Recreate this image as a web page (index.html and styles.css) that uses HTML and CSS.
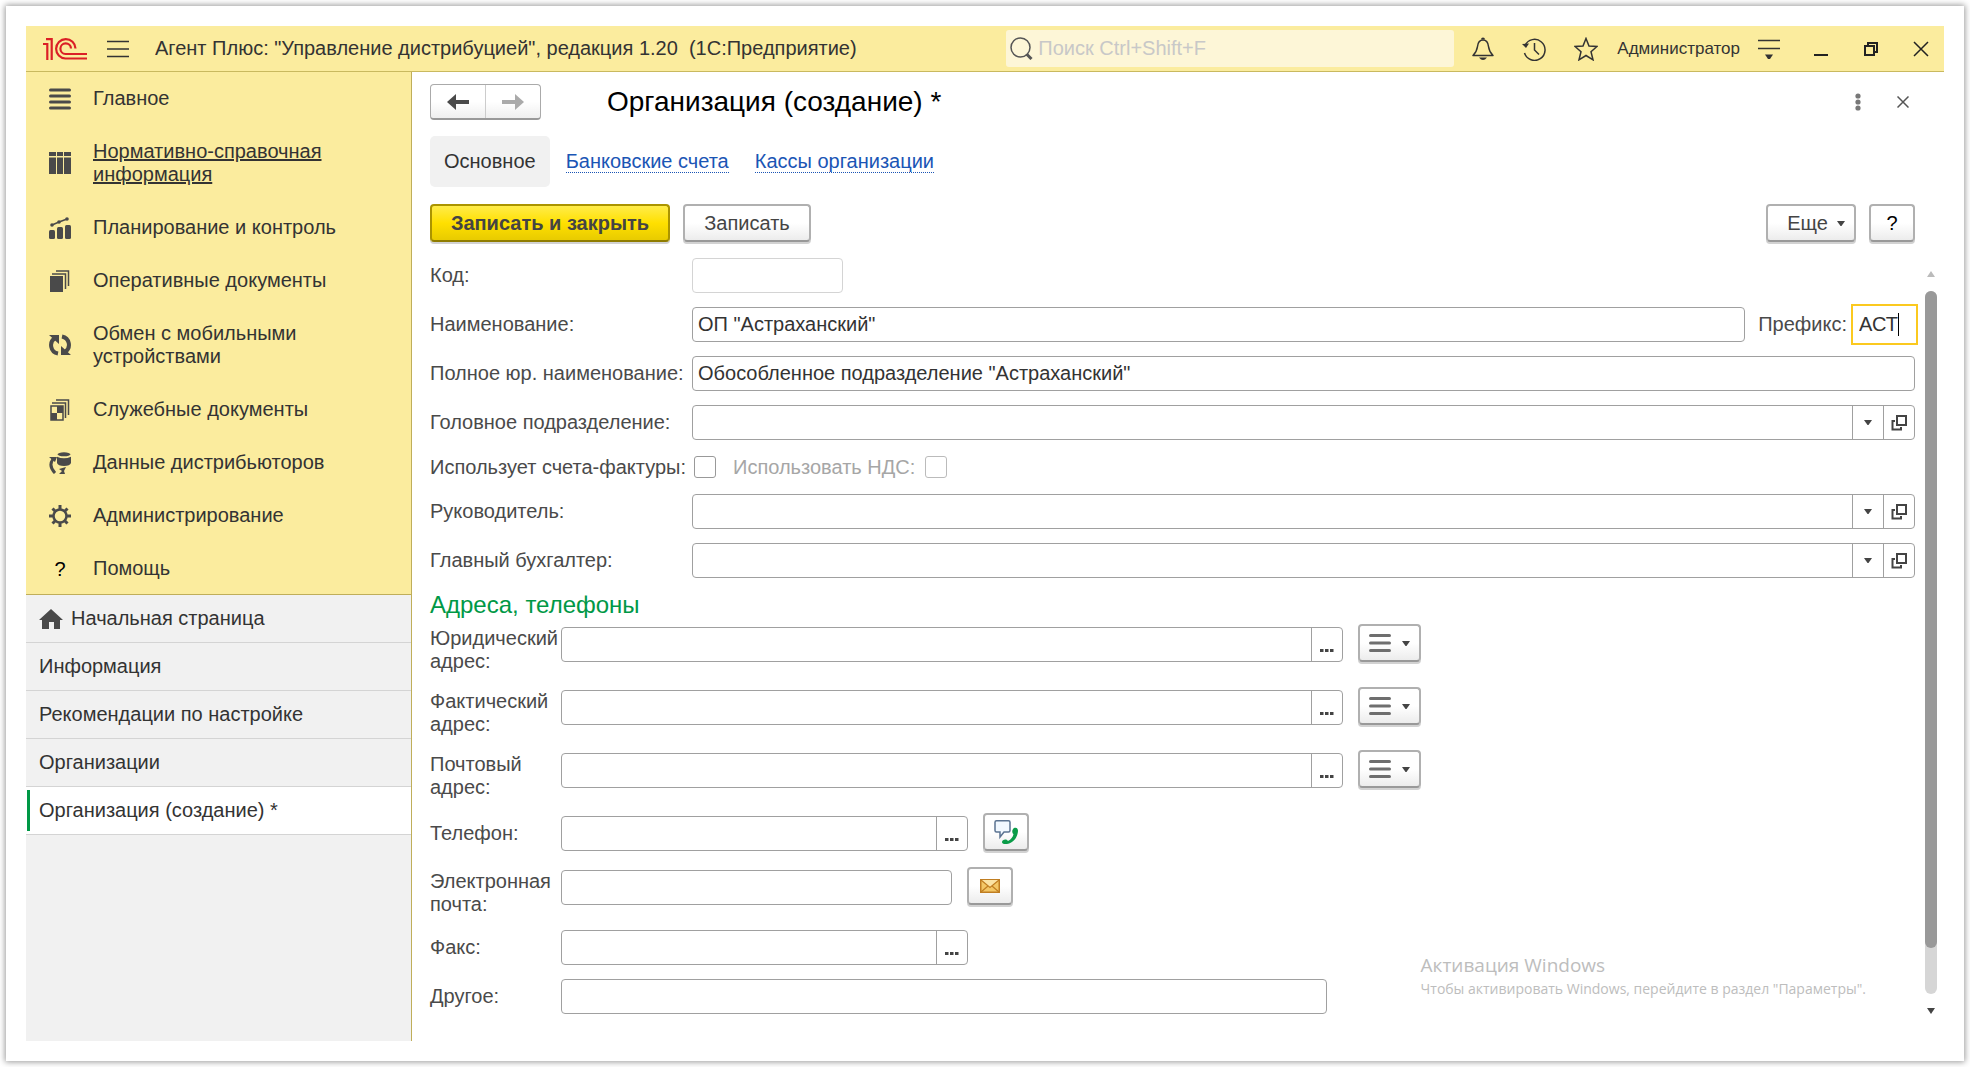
FILE: index.html
```html
<!DOCTYPE html>
<html lang="ru">
<head>
<meta charset="utf-8">
<title>Организация (создание) *</title>
<link rel="stylesheet" href="styles.css">
</head>
<body>
<svg class="defs" aria-hidden="true">
  <symbol id="i-open" viewBox="0 0 16 16"><path d="M6 1h9v9H6zM4 6H1.500v8.500H10V12" fill="none" stroke="#444" stroke-width="2"/></symbol>
  <symbol id="i-down" viewBox="0 0 8 5"><path d="M0 0h8L4.500 5h-1z" fill="#444"/></symbol>
  <symbol id="i-dots" viewBox="0 0 14 3"><path d="M0 0h3.500v3H0zM5 0h3.500v3H5zM10 0h3.500v3H10z" fill="#444"/></symbol>
  <symbol id="i-lines" viewBox="0 0 22 20"><path d="M1.500 2.500h19M1.500 10h19M1.500 17.500h19" stroke="#6e6e6e" stroke-width="3" stroke-linecap="round"/></symbol>
</svg>
<div class="card">
  <div class="app">
    <header class="topbar">
      <svg class="logo" viewBox="0 0 44 22" role="img" aria-label="1С"><g fill="none" stroke="#db1f26" stroke-width="2.200"><path d="M0 6h4.300V22M3 1.200h5.700V22"/><path d="M32.500 10.500A9.700 9.700 0 1 0 22.500 20.500H44"/><path d="M28 10.500A5.300 5.300 0 1 0 22.500 16H44"/></g></svg>
      <button class="icon-btn burger" aria-label="Меню"><svg width="22" height="18" viewBox="0 0 22 18"><path d="M0 1.500h22M0 9h22M0 16.500h22" stroke="#333" stroke-width="1.500"/></svg></button>
      <div class="app-title">Агент Плюс: "Управление дистрибуцией", редакция 1.20&nbsp; (1С:Предприятие)</div>
      <label class="search">
        <svg width="23" height="23" viewBox="0 0 23 23"><circle cx="10.500" cy="10.500" r="9.500" fill="none" stroke="#555" stroke-width="1.500"/><path d="M16.500 17l5 5" stroke="#555" stroke-width="3"/></svg>
        <input type="search" placeholder="Поиск Ctrl+Shift+F" aria-label="Поиск">
      </label>
      <div class="tools">
        <button class="icon-btn" aria-label="Уведомления"><svg width="22" height="24" viewBox="0 0 22 24"><path d="M1 18.500h20c-3-3-4-5-4.500-9C16 5 14 3 11 3S6 5 5.500 9.500C5 13.500 4 15.500 1 18.500z" fill="none" stroke="#333" stroke-width="1.500" stroke-linejoin="round"/><path d="M9 2.500a2 2 0 0 1 4 0zM7 20.500h8q-4 5-8 0z" fill="#333"/></svg></button>
        <button class="icon-btn" aria-label="История"><svg width="24" height="24" viewBox="0 0 24 24"><path d="M3 8.500A10.500 10.500 0 1 1 2.500 16M12.500 6v7l4.500 4.500" fill="none" stroke="#333" stroke-width="1.500"/><path d="M0 7l7-.500L4 11z" fill="#333"/></svg></button>
        <button class="icon-btn" aria-label="Избранное"><svg width="24" height="24" viewBox="0 0 24 24"><path d="M12 1.500l3 7.500 8 .500-6 5.300 2 8-7-4.300-7 4.300 2-8L1 9.500 9 9z" fill="none" stroke="#333" stroke-width="1.500"/></svg></button>
      </div>
      <a class="user" href="#">Администратор</a>
      <button class="icon-btn service" aria-label="Сервис"><svg width="22" height="20" viewBox="0 0 22 20"><path d="M0 1.500h22M0 9.500h22" stroke="#333" stroke-width="1.500"/><path d="M7 15.500h8L12 20h-2z" fill="#333"/></svg></button>
      <div class="window-btns">
        <button class="icon-btn" aria-label="Свернуть"><svg width="16" height="16" viewBox="0 0 16 16"><path d="M1 14h14" stroke="#222" stroke-width="2"/></svg></button>
        <button class="icon-btn" aria-label="Развернуть"><svg width="16" height="16" viewBox="0 0 16 16"><path d="M2 5h9v9H2zM5 5V2h9v9h-3" fill="none" stroke="#222" stroke-width="2"/></svg></button>
        <button class="icon-btn" aria-label="Закрыть"><svg width="16" height="16" viewBox="0 0 16 16"><path d="M1 1l14 14M15 1L1 15" stroke="#222" stroke-width="1.500"/></svg></button>
      </div>
    </header>
    <div class="body">
      <aside class="sidebar">
        <nav class="sections">
          <a href="#"><svg viewBox="0 0 22 22"><path d="M1.500 2h19M1.500 8h19M1.500 14h19M1.500 20h19" stroke="#4a4a4a" stroke-width="3" stroke-linecap="round"/></svg><span>Главное</span></a>
          <a href="#" class="hovered"><svg viewBox="0 0 22 22"><path d="M0 0h7v4H0zM8 0h6v4H8zM15 0h7v4h-7zM0 5.500h7V22H0zM8 5.500h6V22H8zM15 5.500h7V22h-7z" fill="#4a4a4a"/></svg><span>Нормативно-справочная информация</span></a>
          <a href="#"><svg viewBox="0 0 22 22"><g fill="#4a4a4a"><rect y="13" width="6" height="9" rx="1.500"/><rect x="8" y="10" width="6" height="12" rx="1.500"/><rect x="16" y="8" width="6" height="14" rx="1.500"/><circle cx="3" cy="8" r="1.800"/><circle cx="10" cy="5" r="1.800"/><circle cx="18" cy="2" r="1.800"/></g><path d="M3 8l7-3 8-3" fill="none" stroke="#4a4a4a" stroke-width="1.500"/></svg><span>Планирование и контроль</span></a>
          <a href="#"><svg viewBox="0 0 22 22"><path d="M1 6h13v16H1z" fill="#4a4a4a"/><path d="M3 4h13.500v15M7 1h12.500v15" fill="none" stroke="#4a4a4a" stroke-width="1.500"/></svg><span>Оперативные документы</span></a>
          <a href="#"><svg viewBox="0 0 22 22"><path d="M9 19.500A8.500 8.500 0 0 1 6 4M13 2.500A8.500 8.500 0 0 1 16 18" fill="none" stroke="#4a4a4a" stroke-width="4"/><path d="M0 1h10v9zM22 21H12v-9z" fill="#4a4a4a"/></svg><span>Обмен с мобильными устройствами</span></a>
          <a href="#"><svg viewBox="0 0 22 22"><path d="M2 7h12v14H2z" fill="none" stroke="#4a4a4a" stroke-width="1.500"/><path d="M8 7h6v7H8zM2 14h6v7H2z" fill="#4a4a4a"/><path d="M3 4h13.500v15M7 1h12.500v15" fill="none" stroke="#4a4a4a" stroke-width="1.500"/></svg><span>Служебные документы</span></a>
          <a href="#"><svg viewBox="0 0 22 22"><ellipse cx="15" cy="2.300" rx="6.500" ry="2" fill="#4a4a4a"/><path d="M8 4.800q7 3 14 0V11q-1 3-7 3t-7-3z" fill="#4a4a4a"/><path d="M6 21Q-1 14 4 7" fill="none" stroke="#4a4a4a" stroke-width="3"/><path d="M0 5h8l-2 5zM10 17l7-2-2 4 1 3h-6l3-3z" fill="#4a4a4a"/></svg><span>Данные дистрибьюторов</span></a>
          <a href="#"><svg viewBox="0 0 22 22"><circle cx="11" cy="11" r="6.500" fill="none" stroke="#4a4a4a" stroke-width="2.500"/><path d="M11 0v4M11 18v4M0 11h4M18 11h4M3.500 3.500l2.500 2.500M16 16l2.500 2.500M18.500 3.500L16 6M6 16l-2.500 2.500" stroke="#4a4a4a" stroke-width="3"/></svg><span>Администрирование</span></a>
          <a href="#"><b class="question">?</b><span>Помощь</span></a>
        </nav>
        <nav class="windows">
          <a href="#"><svg width="24" height="20" viewBox="0 0 24 20"><path d="M12 0l12 11h-3v9h-6v-7H10v7H3v-9H0z" fill="#4a4a4a"/></svg>Начальная страница</a>
          <a href="#">Информация</a>
          <a href="#">Рекомендации по настройке</a>
          <a href="#">Организации</a>
          <a href="#" class="current">Организация (создание) *</a>
        </nav>
      </aside>
      <main class="main">
        <div class="page-head">
          <div class="history">
            <button aria-label="Назад"><svg width="22" height="16" viewBox="0 0 22 16"><path d="M0 8l9-8v6h13v4H9v6z" fill="#4a4a4a"/></svg></button>
            <button aria-label="Вперед" disabled><svg width="22" height="16" viewBox="0 0 22 16"><path d="M22 8l-9-8v6H0v4h13v6z" fill="#aaa"/></svg></button>
          </div>
          <h1>Организация (создание) *</h1>
          <button class="icon-btn" aria-label="Действия"><svg width="16" height="18" viewBox="0 0 16 18"><g fill="#777"><circle cx="8" cy="3" r="2.600"/><circle cx="8" cy="9" r="2.600"/><circle cx="8" cy="15" r="2.600"/></g></svg></button>
          <button class="icon-btn" aria-label="Закрыть форму"><svg width="12" height="12" viewBox="0 0 12 12"><path d="M.500.500l11 11M11.500.500l-11 11" stroke="#555" stroke-width="1.500"/></svg></button>
        </div>
        <nav class="tabs">
          <span class="active">Основное</span>
          <a href="#">Банковские счета</a>
          <a href="#">Кассы организации</a>
        </nav>
        <div class="commands">
          <button class="btn primary">Записать и закрыть</button>
          <button class="btn save">Записать</button>
          <button class="btn more">Еще<svg width="8" height="5"><use href="#i-down"/></svg></button>
          <button class="btn help">?</button>
        </div>
        <div class="scroll-area">
          <form class="form">
            <div class="group">
              <div class="row"><label for="code">Код:</label><input class="box short" id="code" disabled></div>
              <div class="row"><label for="name">Наименование:</label><input class="box grow" id="name" value='ОП "Астраханский"'><label class="inner" for="prefix">Префикс:</label><span class="prefix"><input class="box" id="prefix" value="АСТ"><i class="caret"></i></span></div>
              <div class="row"><label for="full">Полное юр. наименование:</label><input class="box grow" id="full" value='Обособленное подразделение "Астраханский"'></div>
              <div class="row"><label for="head">Головное подразделение:</label><div class="box combo grow"><input id="head"><button type="button" aria-label="Выбрать"><svg width="8" height="5"><use href="#i-down"/></svg></button><button type="button" aria-label="Открыть"><svg width="16" height="16"><use href="#i-open"/></svg></button></div></div>
              <div class="row checks"><label for="inv">Использует счета-фактуры:</label><input type="checkbox" id="inv"><label class="inner muted" for="vat">Использовать НДС:</label><input type="checkbox" id="vat" disabled></div>
              <div class="row"><label for="chief">Руководитель:</label><div class="box combo grow"><input id="chief"><button type="button" aria-label="Выбрать"><svg width="8" height="5"><use href="#i-down"/></svg></button><button type="button" aria-label="Открыть"><svg width="16" height="16"><use href="#i-open"/></svg></button></div></div>
              <div class="row"><label for="acc">Главный бухгалтер:</label><div class="box combo grow"><input id="acc"><button type="button" aria-label="Выбрать"><svg width="8" height="5"><use href="#i-down"/></svg></button><button type="button" aria-label="Открыть"><svg width="16" height="16"><use href="#i-open"/></svg></button></div></div>
            </div>
            <h2>Адреса, телефоны</h2>
            <div class="group contacts">
              <div class="row address"><label class="tall" for="legal">Юридический адрес:</label><div class="box combo long"><input id="legal"><button type="button" aria-label="Выбрать"><svg class="dots" width="14" height="3"><use href="#i-dots"/></svg></button></div><button type="button" class="btn list" aria-label="Меню адреса"><svg width="22" height="20"><use href="#i-lines"/></svg><svg width="8" height="5"><use href="#i-down"/></svg></button></div>
              <div class="row address"><label class="tall" for="actual">Фактический адрес:</label><div class="box combo long"><input id="actual"><button type="button" aria-label="Выбрать"><svg class="dots" width="14" height="3"><use href="#i-dots"/></svg></button></div><button type="button" class="btn list" aria-label="Меню адреса"><svg width="22" height="20"><use href="#i-lines"/></svg><svg width="8" height="5"><use href="#i-down"/></svg></button></div>
              <div class="row address"><label class="tall" for="post">Почтовый адрес:</label><div class="box combo long"><input id="post"><button type="button" aria-label="Выбрать"><svg class="dots" width="14" height="3"><use href="#i-dots"/></svg></button></div><button type="button" class="btn list" aria-label="Меню адреса"><svg width="22" height="20"><use href="#i-lines"/></svg><svg width="8" height="5"><use href="#i-down"/></svg></button></div>
              <div class="row phone"><label for="phone">Телефон:</label><div class="box combo middle"><input id="phone" type="tel"><button type="button" aria-label="Выбрать"><svg class="dots" width="14" height="3"><use href="#i-dots"/></svg></button></div><button type="button" class="btn square" aria-label="Позвонить"><svg width="24" height="24" viewBox="0 0 24 24"><path d="M2.500.800h12q1.500 0 1.500 1.500v8.200q0 1.500-1.500 1.500H10l-4 5v-5H2.500Q1 12 1 10.500V2.300Q1 .800 2.500.800z" fill="#f1f8ff" stroke="#5b7391" stroke-width="1.500"/><path d="M20 8c3-1 4 1 4 3-.500 7-5 12-11 13-3 .500-5-.500-5-2 0-2 3-3 5-2l1 1c3-1.500 5-4 5.500-7-1.500-1-2-4 .500-6z" fill="#0a9c48"/></svg></button></div>
              <div class="row"><label class="tall" for="mail">Электронная почта:</label><input class="box mail" id="mail" type="email"><button type="button" class="btn square" aria-label="Написать"><svg width="20" height="14" viewBox="0 0 20 14"><path d="M.750.750h18.500v12.500H.750z" fill="#f3c766" stroke="#c07e22" stroke-width="1.500"/><path d="M1 1l9 7.500L19 1z" fill="#fbe3a4"/><path d="M1 1l9 7.500L19 1M1 13l7-6M19 13l-7-6" fill="none" stroke="#c07e22" stroke-width="1.200"/></svg></button></div>
              <div class="row"><label for="fax">Факс:</label><div class="box combo middle"><input id="fax" type="tel"><button type="button" aria-label="Выбрать"><svg class="dots" width="14" height="3"><use href="#i-dots"/></svg></button></div></div>
              <div class="row"><label for="other">Другое:</label><input class="box other" id="other"></div>
            </div>
          </form>
          <div class="scrollbar" aria-hidden="true">
            <svg width="8" height="6" viewBox="0 0 8 6"><path d="M4 0l4 6H0z" fill="#bbb"/></svg>
            <div class="track"><div class="thumb"></div></div>
            <svg width="8" height="6" viewBox="0 0 8 6"><path d="M4 6l4-6H0z" fill="#444"/></svg>
          </div>
        </div>
        <div class="watermark"><strong>Активация Windows</strong><span>Чтобы активировать Windows, перейдите в раздел "Параметры".</span></div>
      </main>
    </div>
  </div>
</div>
</body>
</html>
```
FILE: styles.css
```css
* { box-sizing: border-box; }
body {
  margin: 0;
  min-height: 100vh;
  display: flex;
  padding: 6px;
  background: #fff;
  color: #333;
  font: 20px/23px "Liberation Sans", Arial, sans-serif;
}
button, input { font: inherit; color: inherit; }
button { padding: 0; border: 0; background: none; }
a { color: inherit; text-decoration: none; }
svg { display: block; flex: none; }
.defs { position: absolute; width: 0; height: 0; }

.card {
  flex: 1;
  display: flex;
  padding: 20px;
  background: #fff;
  box-shadow: 0 0 6px 1px rgba(0, 0, 0, .4);
}
.app { flex: 1; min-width: 0; display: flex; flex-direction: column; }

/* Top bar */
.topbar {
  display: flex;
  align-items: center;
  height: 46px;
  padding: 0 15px 0 17px;
  background: #fbec9e;
  border-bottom: 1px solid #c9b95f;
}
.icon-btn { display: flex; align-items: center; justify-content: center; flex: none; }
.logo { width: 44px; height: 22px; }
.burger { margin: 0 26px 0 20px; }
.app-title { flex: 1; min-width: 0; white-space: nowrap; overflow: hidden; }
.search {
  flex: 0 1 448px;
  display: flex;
  align-items: center;
  gap: 5px;
  height: 37px;
  padding: 0 4px;
  border-radius: 3px;
  background: #fdf6d7;
}
.search input { flex: 1; min-width: 0; padding: 0; border: 0; outline: 0; background: none; }
.search input::placeholder { color: #c8c8c8; opacity: 1; }
.tools { display: flex; gap: 28px; margin: 0 19px 0 18px; }
.user { font-size: 17px; }
.service { margin: 0 33px 0 18px; }
.window-btns { display: flex; gap: 34px; }

.body { flex: 1; display: flex; }

/* Sidebar */
.sidebar {
  flex: none;
  width: 386px;
  background: #f1f1f1;
  border-right: 1px solid #bfae5a;
}
.sections { background: #fbec9e; box-shadow: inset 0 -1px #bfae5a; }
.sections a {
  display: flex;
  align-items: center;
  gap: 22px;
  padding: 15px 60px 15px 23px;
}
.sections svg, .question { width: 22px; height: 22px; flex: none; }
.question { color: #000; font-weight: 400; text-align: center; }
.hovered { text-decoration: underline; }
.windows a {
  display: flex;
  align-items: center;
  gap: 8px;
  height: 48px;
  padding: 0 13px;
  border-bottom: 1px solid #d4d4d4;
}
.windows .current {
  background: linear-gradient(#009846, #009846) 1px 3px / 3px 41px no-repeat #fff;
}

/* Main area */
.main {
  position: relative;
  flex: 1;
  min-width: 0;
  padding: 12px 7px 0 18px;
  display: flex;
  flex-direction: column;
}
.page-head { display: flex; align-items: center; gap: 31px; padding-right: 28px; height: 36px; }
.history {
  display: flex;
  width: 111px;
  height: 36px;
  border: 1px solid #aaa;
  border-bottom: 2px solid #999;
  border-radius: 4px;
  background: linear-gradient(#fff 50%, #efefef);
}
.history button { flex: 1; display: flex; align-items: center; justify-content: center; }
.history button + button { border-left: 1px solid #ccc; }
h1 { flex: 1; margin: 0 0 0 35px; color: #000; font-size: 28px; line-height: 32px; font-weight: 400; }
.tabs { display: flex; align-items: center; gap: 26px; height: 51px; margin: 16px 0 17px; }
.tabs .active { padding: 14px; margin-right: -10px; border-radius: 5px; background: #f1f1f1; }
.tabs a { color: #1a55b5; line-height: 21px; border-bottom: 1px dotted #1a55b5; }

.commands { display: flex; gap: 13px; margin: 0 22px 15px 0; }
.btn {
  display: flex;
  align-items: center;
  justify-content: center;
  flex: none;
  height: 38px;
  margin-bottom: 1px;
  border: 2px solid #b0b0b0;
  border-bottom-color: #999;
  border-radius: 4px;
  background: linear-gradient(#fff 50%, #ececec);
  box-shadow: 0 2px #d2d2d2;
  color: #444;
}
.primary {
  width: 240px;
  font-weight: 700;
  border-color: #ab9400;
  border-bottom-color: #8f7c00;
  background: linear-gradient(#ffec4a, #ffe000 50%, #e8cb00);
}
.save { width: 128px; }
.more { width: 90px; gap: 9px; margin-left: auto; padding-left: 10px; }
.help { width: 46px; color: #000; }

/* Form */
.scroll-area { display: flex; gap: 10px; }
.form { flex: 1; min-width: 0; color: #4a4a4a; }
.group { display: flex; flex-direction: column; gap: 14px; }
.row { display: flex; align-items: flex-start; }
.row > label { flex: none; width: 262px; padding: 6px 0; }
.row > .inner { width: auto; margin: 0 7px 0 13px; }
.contacts .row > label { width: 131px; }
.contacts .row > .tall { padding: 0; }
.box {
  height: 35px;
  padding: 0 5px;
  min-width: 0;
  border: 1px solid #a0a0a0;
  border-radius: 4px;
  background: #fff;
  color: #333;
}
.box:disabled { border-color: #d4d4d4; }
.grow { flex: 1; }
.short { width: 151px; }
.prefix { position: relative; display: flex; width: 61px; }
.prefix .box {
  width: 100%;
  padding: 0 4px;
  border-color: transparent;
  border-radius: 0;
  outline: 2px solid #fbc91f;
  outline-offset: 1px;
}
.caret { position: absolute; left: 44px; top: 6px; width: 1px; height: 23px; background: #000; }
.combo { display: flex; padding: 0; }
.combo input { flex: 1; min-width: 0; padding: 0 5px; border: 0; outline: 0; background: none; }
.combo button {
  display: flex;
  align-items: center;
  justify-content: center;
  width: 31px;
  border-left: 1px solid #a0a0a0;
}
.dots { margin-top: 11px; }
.checks { align-items: center; height: 26px; }
.checks > label { padding: 0; }
.checks .muted { color: #a6a6a6; margin: 0 8px 0 17px; }
.checks input {
  appearance: none;
  width: 22px;
  height: 22px;
  margin: 0 0 0 2px;
  border: 1px solid #999;
  border-radius: 3px;
  background: #fff;
}
.checks input:disabled { border-color: #bbb; }

h2 { margin: 14px 0 9px; color: #009846; font-size: 24px; line-height: 26px; font-weight: 400; }
.address { min-height: 49px; }
.phone { min-height: 40px; }
.long { width: 782px; }
.middle { width: 407px; }
.mail { width: 391px; }
.other { width: 766px; }
.row .btn { margin: -3px 0 0 15px; }
.list { width: 63px; gap: 11px; }
.square { width: 46px; }

.scrollbar {
  flex: none;
  width: 12px;
  display: flex;
  flex-direction: column;
  align-items: center;
  gap: 14px;
  padding-top: 13px;
}
.track { flex: 1; width: 12px; border-radius: 6px; background: #d6d6d6; }
.thumb { height: 93.5%; border-radius: 6px; background: #999; }

/* System notice laid over the form */
.watermark {
  position: absolute;
  right: 78px;
  bottom: 42px;
  display: flex;
  flex-direction: column;
  color: #bdbdbd;
  font-family: "Open Sans", "Noto Sans", sans-serif;
  font-size: 14px;
  line-height: 21px;
}
.watermark strong { font-size: 19px; line-height: 25px; font-weight: 400; }
```
